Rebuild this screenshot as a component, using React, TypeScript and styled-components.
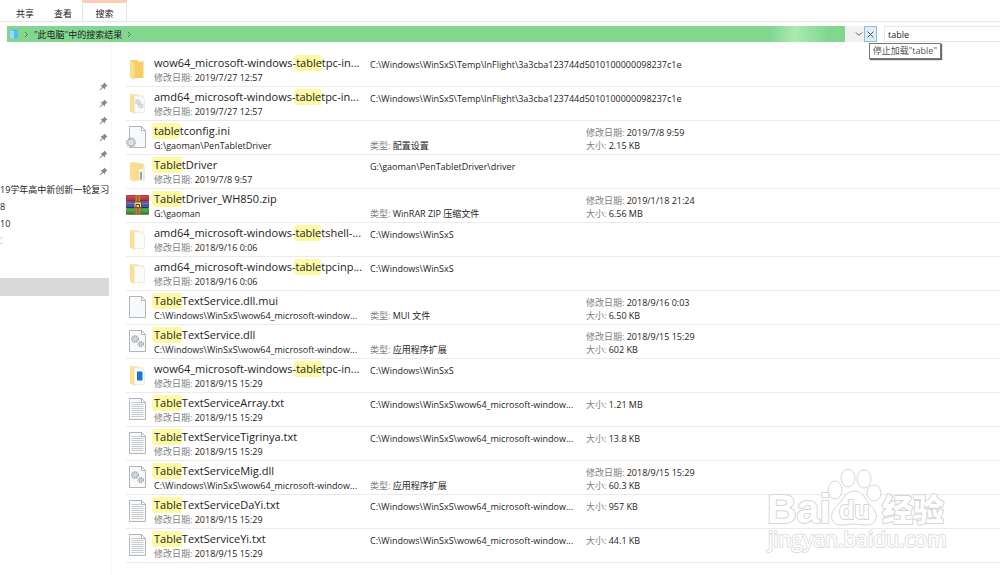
import React from "react";
import styled, { createGlobalStyle } from "styled-components";

const GlobalStyle = createGlobalStyle`
  * { box-sizing: border-box; }
  body {
    margin: 0;
    background: #fff;
    color: #1c1c1c;
    font: 9px/13px "Open Sans", "Noto Sans CJK SC", sans-serif;
    overflow-x: hidden;
  }
  button, input { font: inherit; color: inherit; }
`;

const Page = styled.div`
  position: relative;
  min-height: 100vh;
  display: flex;
  flex-direction: column;
`;

const Ribbon = styled.nav`
  display: flex;
  height: 22px;
  padding-left: 6px;
  border-bottom: 1px solid #e6e6e6;
`;

const RibbonTab = styled.button<{ $active?: boolean }>`
  width: ${(p) => (p.$active ? 45 : 38)}px;
  padding: ${(p) => (p.$active ? 2 : 5)}px 0 0;
  border: solid ${(p) => (p.$active ? "#e8e4e2" : "transparent")};
  border-width: 0 ${(p) => (p.$active ? 1 : 0)}px;
  border-top: ${(p) => (p.$active ? "3px solid #fbcdb7" : "0")};
  background: none;
  text-align: center;
`;

const Toolbar = styled.div`
  display: flex;
  align-items: stretch;
  height: 16px;
  margin: 4px 0 0 7px;
`;

const AddressBar = styled.div`
  flex: 1;
  display: flex;
  align-items: center;
  gap: 5px;
  padding-left: 2px;
  background: linear-gradient(90deg, #82d690 91%, #aaeab1 94%, #82d690 98%);
`;

const Crumb = styled.a`
  color: #222;
  text-decoration: none;
`;

const IconButton = styled.button<{ $hot?: boolean }>`
  display: grid;
  place-items: center;
  width: ${(p) => (p.$hot ? 13 : 19)}px;
  padding: 0;
  padding-left: ${(p) => (p.$hot ? 0 : 8)}px;
  border: ${(p) => (p.$hot ? "1px solid #8dbfdc" : "0")};
  background: ${(p) => (p.$hot ? "#ddeef8" : "#f1f1f1")};
`;

const SearchInput = styled.input`
  width: 116px;
  margin-left: 7px;
  padding: 0 3px;
  border: 1px solid #e8e8e8;
  border-right: 0;
  outline: 0;
  background: #fff;
`;

const Tooltip = styled.div`
  position: absolute;
  z-index: 2;
  top: 43px;
  right: 59px;
  padding: 0 3px;
  border: 1px solid #777;
  background: #fff;
  box-shadow: 1px 1px 1px #666;
  color: #555;
  line-height: 14px;
`;

const Body = styled.div`
  flex: 1;
  display: flex;
`;

const Sidebar = styled.aside`
  width: 112px;
  padding: 37px 2px 0 0;
  border-right: 1px solid #f8f8f8;
  overflow: hidden;
`;

const SideRow = styled.div<{ $selected?: boolean }>`
  display: flex;
  align-items: center;
  height: ${(p) => (p.$selected ? 18 : 17)}px;
  margin-top: ${(p) => (p.$selected ? 29 : 0)}px;
  background: ${(p) => (p.$selected ? "#d9d9d9" : "none")};
  white-space: nowrap;
  overflow: hidden;
`;

const PinSlot = styled.span`
  display: flex;
  margin-left: auto;
  padding: 0 1px 2px 0;
`;

const Results = styled.ul`
  flex: 1;
  min-width: 0;
  margin: 11px 0 12px 14px;
  padding: 0;
  list-style: none;
`;

const ResultRow = styled.li`
  display: grid;
  grid-template-columns: 28px 216px 216px 1fr;
  height: 34px;
  border-bottom: 1px solid #ebebeb;
  white-space: nowrap;
`;

const IconCell = styled.div`
  padding-top: 4px;
  svg { display: block; }
`;

const NameCell = styled.div`
  padding-top: 2px;
`;

const Title = styled.div`
  isolation: isolate;
  font-size: 11px;
  line-height: 16px;
`;

const Mark = styled.mark`
  position: relative;
  z-index: -1;
  margin: 0 0 0 -2px;
  padding: 0 0 1px 2px;
  border-radius: 3px;
  background: #fdf9a4;
  color: inherit;
`;

const Cell = styled.div<{ $bottom?: boolean }>`
  padding-top: ${(p) => (p.$bottom ? 18 : 5)}px;
`;

const Label = styled.span`
  color: #808080;
`;

const Watermark = styled.svg`
  position: absolute;
  right: 50px;
  top: 464px;
  pointer-events: none;
`;

type Kind = "folder" | "folderGear" | "folderFile" | "folderPage" | "folderBlue" | "ini" | "zip" | "blank" | "dll" | "txt";

const Gear = ({ x, y, r, light }: { x: number; y: number; r: number; light?: boolean }) => (
  <g fill="none" stroke={light ? "#c3cbd1" : "#a3b0b9"}>
    <circle cx={x} cy={y} r={r} strokeWidth="1.6" strokeDasharray="1.4 0.9" />
    <circle cx={x} cy={y} r={r - 0.9} fill="#e3e9ed" strokeWidth="0.9" />
    <circle cx={x} cy={y} r="0.9" fill="#fff" strokeWidth="0.5" />
  </g>
);

const Sheet = () => (
  <path d="M3.5 1.5h12l4 4v17h-16z M15.5 1.5v4h4" fill="#f8f9fa" stroke="#a9acaf" strokeWidth="0.9" />
);

const FileIcon = ({ kind }: { kind: Kind }) => {
  if (kind === "zip") {
    return (
      <svg width="24" height="24" viewBox="0 0 24 24" aria-hidden="true">
        <rect y="2" width="23" height="6.5" rx="1" fill="#c4303a" />
        <rect y="8.5" width="23" height="6.5" rx="1" fill="#4656b0" />
        <rect y="15" width="23" height="6.5" rx="1" fill="#3f9a33" />
        <path d="M1 4h21M1 10.500h21M1 17h21" stroke="#fff" strokeOpacity="0.25" />
        <path d="M0 8h23M0 14.500h23M0 21h23" stroke="#1b1b1b" strokeOpacity="0.6" />
        <rect x="9" y="2" width="5.500" height="19.500" fill="#a9622a" />
        <path d="M10.200 2v19M13.300 2v19" stroke="#e1a765" strokeWidth="0.6" />
        <rect x="8" y="9" width="7.500" height="5.500" rx="1" fill="#ecd49a" stroke="#5e3c17" strokeWidth="0.8" />
        <path d="M10 14v-2.500h3.500V14" fill="none" stroke="#5e3c17" />
      </svg>
    );
  }
  if (kind.startsWith("folder")) {
    return (
      <svg width="24" height="24" viewBox="0 0 24 24" aria-hidden="true">
        <path d="M4 3h7l1.500 1.500H17.500V21H4z" fill={kind === "folder" ? "#f6cf68" : "#fbe7ab"} />
        {kind !== "folder" && (
          <path d="M7.500 5h8l3 3v13.500h-11z" fill="#fafbfc" stroke="#dfe2e5" strokeWidth="0.7" />
        )}
        {kind === "folderGear" && (
          <>
            <Gear light x={11.8} y={11} r={2.2} />
            <Gear light x={14.8} y={15} r={2} />
          </>
        )}
        {kind === "folderFile" && (
          <>
            <path d="M7.500 4.500H17.500V21H7.500z" fill="#f7dc8d" />
            <path d="M13 10h4.500v11H13z" fill="#eef3f1" />
            <path d="M15 13v7.500" stroke="#6f9389" strokeWidth="1.500" />
          </>
        )}
        {kind === "folderBlue" && <path d="M11 8.500h5.500v9H11z" fill="#1d77cf" />}
        <path d="M4 3l4.500 3.500V23L4 20.500z" fill={kind === "folder" ? "#fbe08c" : "#fcdf90"} />
      </svg>
    );
  }
  return (
    <svg width="24" height="24" viewBox="0 0 24 24" aria-hidden="true">
      <Sheet />
      {kind === "txt" && (
        <path d="M5.500 5.500h9M5.500 7.500h12M5.500 9.500h12M5.500 11.500h12M5.500 13.500h12M5.500 15.500h12M5.500 17.500h12M5.500 19.500h12" stroke="#c3c6c8" strokeWidth="0.9" />
      )}
      {kind === "dll" && (
        <>
          <Gear x={9} y={10} r={3.2} />
          <Gear x={14.8} y={15} r={2.5} />
        </>
      )}
      {kind === "ini" && <Gear x={5} y={17.5} r={4.2} />}
    </svg>
  );
};

interface Result {
  kind: Kind;
  name: [string, string, string];
  place?: string;
  date?: string;
  path?: string;
  type?: string;
  modified?: string;
  size?: string;
}

const WINSXS = "C:\\Windows\\WinSxS";
const WOW = WINSXS + "\\wow64_microsoft-window...";
const INFLIGHT = WINSXS + "\\Temp\\InFlight\\3a3cba123744d5010100000098237c1e";

const results: Result[] = [
  { kind: "folder", name: ["wow64_microsoft-windows-", "table", "tpc-in..."], date: "2019/7/27 12:57", path: INFLIGHT },
  { kind: "folderGear", name: ["amd64_microsoft-windows-", "table", "tpc-in..."], date: "2019/7/27 12:57", path: INFLIGHT },
  { kind: "ini", name: ["", "table", "tconfig.ini"], place: "G:\\gaoman\\PenTabletDriver", type: "配置设置", modified: "2019/7/8 9:59", size: "2.15 KB" },
  { kind: "folderFile", name: ["", "Table", "tDriver"], date: "2019/7/8 9:57", path: "G:\\gaoman\\PenTabletDriver\\driver" },
  { kind: "zip", name: ["", "Table", "tDriver_WH850.zip"], place: "G:\\gaoman", type: "WinRAR ZIP 压缩文件", modified: "2019/1/18 21:24", size: "6.56 MB" },
  { kind: "folderPage", name: ["amd64_microsoft-windows-", "table", "tshell-..."], date: "2018/9/16 0:06", path: WINSXS },
  { kind: "folderPage", name: ["amd64_microsoft-windows-", "table", "tpcinp..."], date: "2018/9/16 0:06", path: WINSXS },
  { kind: "blank", name: ["", "Table", "TextService.dll.mui"], place: WOW, type: "MUI 文件", modified: "2018/9/16 0:03", size: "6.50 KB" },
  { kind: "dll", name: ["", "Table", "TextService.dll"], place: WOW, type: "应用程序扩展", modified: "2018/9/15 15:29", size: "602 KB" },
  { kind: "folderBlue", name: ["wow64_microsoft-windows-", "table", "tpc-in..."], date: "2018/9/15 15:29", path: WINSXS },
  { kind: "txt", name: ["", "Table", "TextServiceArray.txt"], date: "2018/9/15 15:29", path: WOW, size: "1.21 MB" },
  { kind: "txt", name: ["", "Table", "TextServiceTigrinya.txt"], date: "2018/9/15 15:29", path: WOW, size: "13.8 KB" },
  { kind: "dll", name: ["", "Table", "TextServiceMig.dll"], place: WOW, type: "应用程序扩展", modified: "2018/9/15 15:29", size: "60.3 KB" },
  { kind: "txt", name: ["", "Table", "TextServiceDaYi.txt"], date: "2018/9/15 15:29", path: WOW, size: "957 KB" },
  { kind: "txt", name: ["", "Table", "TextServiceYi.txt"], date: "2018/9/15 15:29", path: WOW, size: "44.1 KB" },
];

const Chevron = () => (
  <svg width="5" height="7" viewBox="0 0 5 7" aria-hidden="true">
    <path d="M1 1l2.500 2.500L1 6" fill="none" stroke="#4b7d55" />
  </svg>
);

const Pin = () => (
  <svg width="9" height="9" viewBox="0 0 9 9" aria-hidden="true">
    <path d="M5.200 0.500l3.300 3.300-1 .3-1.400 1.500-.2 1.900-1.900-1.700L1 8.500.500 8l2.700-3L1.500 3.200l1.900-.2L4.900 1.500z" fill="#7f8b96" />
  </svg>
);

const BaiduMark = () => (
  <Watermark width="186" height="96" viewBox="764 464 186 96" aria-hidden="true">
    <g fill="#fff" stroke="#d6d6d6" strokeWidth="1">
      <ellipse cx="835" cy="490" rx="7" ry="9" />
      <ellipse cx="848" cy="478" rx="7" ry="9" />
      <ellipse cx="864" cy="479" rx="7" ry="9" />
      <ellipse cx="874" cy="493" rx="7" ry="8" />
      <path d="M854 491c9 0 11 9 17 15 9 9 6 19-5 19-5 0-8-1-12-1s-8 1-13 1c-11 0-12-11-5-18 7-6 9-16 18-16z" />
    </g>
    <g fill="#fff" stroke="#d6d6d6" strokeWidth="2" strokeLinejoin="round" paintOrder="stroke" fontFamily="'Liberation Sans', sans-serif" fontWeight="700">
      <text x="767" y="523" fontSize="41">Bai</text>
      <text x="839" y="519" fontSize="25">du</text>
      <text x="882" y="521" fontSize="31" fontWeight="900" fontFamily="'Noto Sans CJK SC', sans-serif">经验</text>
      <text x="768" y="547" fontSize="21" fontWeight="400" stroke="#e0e0e0" fontFamily="'Open Sans', sans-serif">jingyan.baidu.com</text>
    </g>
  </Watermark>
);

export default function App() {
  return (
    <Page>
      <GlobalStyle />
      <Ribbon>
        <RibbonTab>共享</RibbonTab>
        <RibbonTab>查看</RibbonTab>
        <RibbonTab $active>搜索</RibbonTab>
      </Ribbon>
      <Toolbar>
        <AddressBar>
          <svg width="10" height="12" viewBox="0 0 10 12" aria-hidden="true">
            <path d="M1 2l4-1 4 1v8l-4 1-4-1z" fill="#58b9ec" />
            <path d="M1 2l4 1v8l-4-1z" fill="#8fdcf8" />
          </svg>
          <Chevron />
          <Crumb href="#results">"此电脑"中的搜索结果</Crumb>
          <Chevron />
        </AddressBar>
        <IconButton aria-label="展开">
          <svg width="8" height="6" viewBox="0 0 8 6"><path d="M1 1.500l3 3 3-3" fill="none" stroke="#555" /></svg>
        </IconButton>
        <IconButton $hot aria-label="停止">
          <svg width="9" height="9" viewBox="0 0 9 9"><path d="M1.500 1.500l6 6M7.500 1.500l-6 6" fill="none" stroke="#555" /></svg>
        </IconButton>
        <SearchInput aria-label="搜索" defaultValue="table" />
      </Toolbar>
      <Tooltip role="tooltip">停止加载"table"</Tooltip>
      <Body>
        <Sidebar>
          {[0, 1, 2, 3, 4, 5].map((n) => (
            <SideRow key={n}><PinSlot><Pin /></PinSlot></SideRow>
          ))}
          <SideRow>19学年高中新创新一轮复习物</SideRow>
          <SideRow>8</SideRow>
          <SideRow>10</SideRow>
          <SideRow>
            <svg width="3" height="8" viewBox="0 0 3 8" aria-hidden="true">
              <path d="M0 1h2.500M0 6.500h2.500" stroke="#a5dcf2" />
            </svg>
          </SideRow>
          <SideRow $selected />
        </Sidebar>
        <Results id="results">
          {results.map((r, i) => (
            <ResultRow key={i}>
              <IconCell><FileIcon kind={r.kind} /></IconCell>
              <NameCell>
                <Title>{r.name[0]}<Mark>{r.name[1]}</Mark>{r.name[2]}</Title>
                {r.place ? <div>{r.place}</div> : <div><Label>修改日期:</Label> {r.date}</div>}
              </NameCell>
              <Cell $bottom={!!r.type}>
                {r.type ? <><Label>类型:</Label> {r.type}</> : r.path}
              </Cell>
              <Cell>
                {r.modified && <div><Label>修改日期:</Label> {r.modified}</div>}
                {r.size && <div><Label>大小:</Label> {r.size}</div>}
              </Cell>
            </ResultRow>
          ))}
        </Results>
      </Body>
      <BaiduMark />
    </Page>
  );
}
